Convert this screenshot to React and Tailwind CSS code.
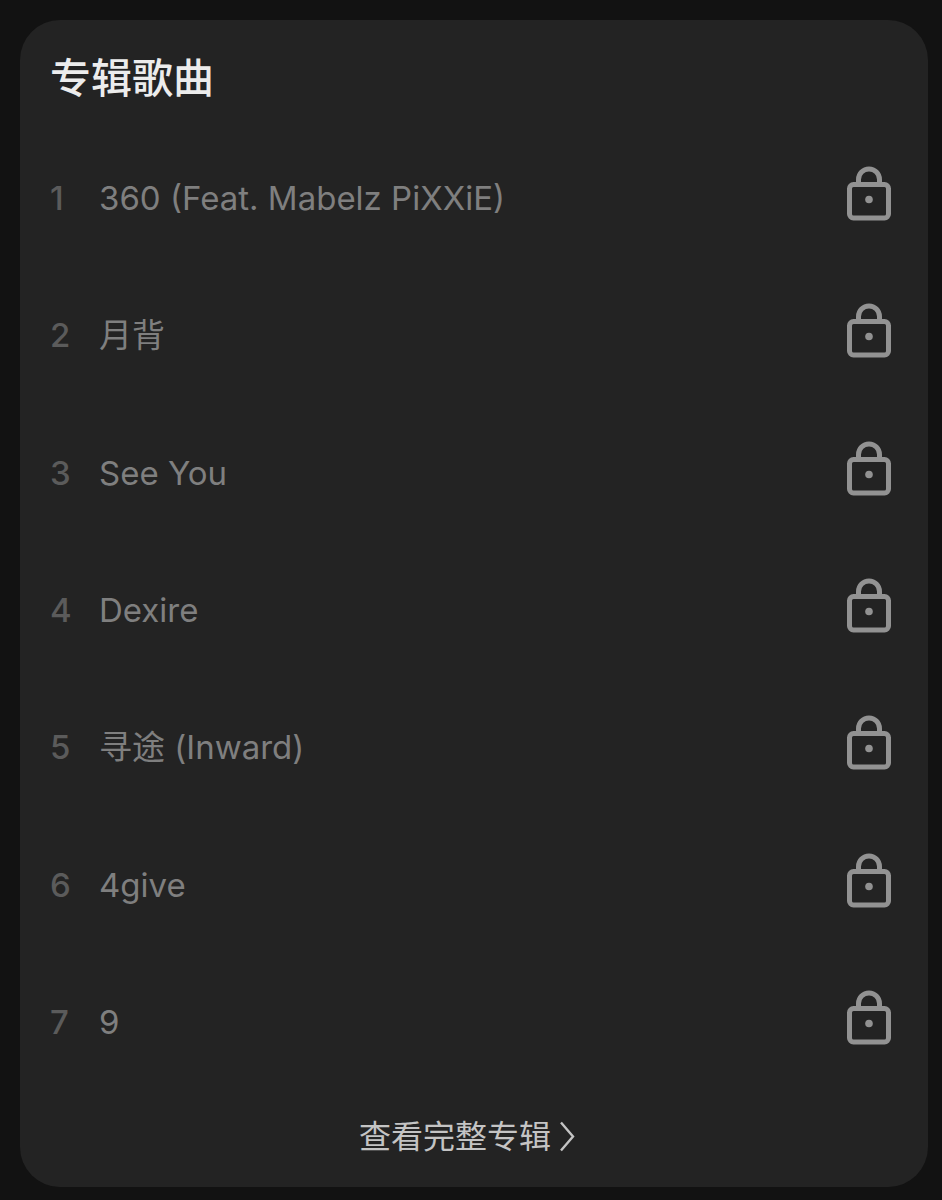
const TITLE = "专辑歌曲";

const songs = [
  { id: 1, name: "360 (Feat. Mabelz PiXXiE)" },
  { id: 2, name: "月背" },
  { id: 3, name: "See You" },
  { id: 4, name: "Dexire" },
  { id: 5, name: "寻途 (Inward)" },
  { id: 6, name: "4give" },
  { id: 7, name: "9" },
];

function LockIcon() {
  return (
    <svg viewBox="0 0 46 64" className="h-16 w-[46px] shrink-0 text-[#929292]" fill="none" stroke="currentColor" strokeWidth="5" role="img" aria-label="已锁定">
      <path d="M12.5 17V13.5a10.5 10.5 0 0 1 21 0V17" />
      <rect x="3.5" y="18.5" width="39" height="33.5" rx="4" />
      <circle cx="23" cy="33.5" r="3.8" fill="currentColor" stroke="none" />
    </svg>
  );
}

function ChevronIcon() {
  return (
    <svg viewBox="0 0 16 32" className="h-8 w-4" fill="none" stroke="currentColor" strokeWidth="2.4" aria-hidden="true">
      <path d="M2 1.5l12 14L2 29.500" />
    </svg>
  );
}

export default function App() {
  return (
    <main className="flex min-h-screen flex-col bg-[#121212] pt-5 pr-3.5 pb-[13px] pl-5 font-['Inter','Noto_Sans_CJK_SC',sans-serif]">
      <section className="flex flex-1 flex-col rounded-[40px] bg-[#232323] pr-9 pl-[30px]">
        <h1 className="pt-7 pb-[21px] text-[41px] leading-[60px] font-medium text-[#ececec]">{TITLE}</h1>

        {/* Lista de canciones */}
        <ol className="grid flex-1 auto-rows-fr">
          {songs.map((song) => (
            <li key={song.id} className="flex items-center">
              <span className="w-[49px] shrink-0 text-[33px] leading-[44px] font-medium text-[#5b5b5b]">{song.id}</span>
              <span className="flex-1 text-[33px] leading-[44px] text-[#7f7f7f]">{song.name}</span>
              <LockIcon />
            </li>
          ))}
        </ol>

        <a href="#album" className="flex items-center justify-center gap-2 pt-6 pr-2 pb-7 text-[32px] leading-[44px] text-[#c4c4c4]">
          查看完整专辑
          <ChevronIcon />
        </a>
      </section>
    </main>
  );
}
